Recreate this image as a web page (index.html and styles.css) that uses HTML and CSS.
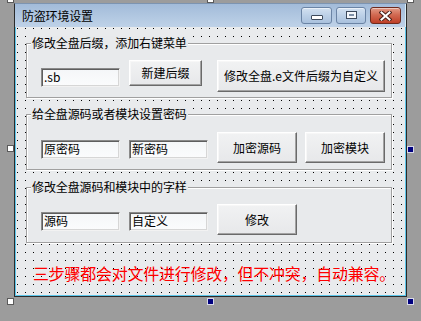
FILE: index.html
```html
<!DOCTYPE html>
<html lang="zh-CN">
<head>
<meta charset="utf-8">
<title>防盗环境设置</title>
<link rel="stylesheet" href="styles.css">
</head>
<body>
<div class="stage">
  <div class="window">
    <div class="titlebar">
      <span class="title">防盗环境设置</span>
      <div class="caption-btns">
        <span class="cbtn min"><i></i></span>
        <span class="cbtn max"><i></i></span>
        <span class="cbtn close">
          <svg width="13" height="10" viewBox="0 0 13 10">
            <path d="M2.5 1.5 L10.5 8.5 M10.5 1.5 L2.5 8.5" stroke="#4a2018" stroke-width="4" stroke-linecap="square" fill="none"/>
            <path d="M2.5 1.5 L10.5 8.5 M10.5 1.5 L2.5 8.5" stroke="#ffffff" stroke-width="2" stroke-linecap="square" fill="none"/>
          </svg>
        </span>
      </div>
    </div>
    <div class="client">
      <fieldset class="frame f1">
        <legend>修改全盘后缀，添加右键菜单</legend>
        <div class="row r1">
          <div class="textbox tb-a">.sb</div>
          <div class="btn b-new">新建后缀</div>
          <div class="btn b-ext">修改全盘.e文件后缀为自定义</div>
        </div>
      </fieldset>
      <fieldset class="frame f2">
        <legend>给全盘源码或者模块设置密码</legend>
        <div class="row r2">
          <div class="textbox tb-a">原密码</div>
          <div class="textbox tb-b">新密码</div>
          <div class="btn b-wide">加密源码</div>
          <div class="btn b-wide2">加密模块</div>
        </div>
      </fieldset>
      <fieldset class="frame f3">
        <legend>修改全盘源码和模块中的字样</legend>
        <div class="row r3">
          <div class="textbox tb-a">源码</div>
          <div class="textbox tb-b">自定义</div>
          <div class="btn b-wide">修改</div>
        </div>
      </fieldset>
      <p class="note">三步骤都会对文件进行修改，但不冲突，自动兼容。</p>
    </div>
  </div>
  <span class="handle hollow h-tl"></span>
  <span class="handle hollow h-tm"></span>
  <span class="handle hollow h-tr"></span>
  <span class="handle hollow h-ml"></span>
  <span class="handle solid h-mr"></span>
  <span class="handle hollow h-bl"></span>
  <span class="handle solid h-bm"></span>
  <span class="handle solid h-br"></span>
</div>
</body>
</html>
```
FILE: styles.css
```css
* { box-sizing: border-box; }

html, body {
  margin: 0;
  padding: 0;
}

body {
  width: 421px;
  height: 321px;
  overflow: hidden;
  background: #9c9c9c;
  font-family: "Noto Sans CJK SC", "DejaVu Sans", sans-serif;
  font-size: 12px;
  color: #000;
}

.stage {
  position: relative;
  width: 421px;
  height: 321px;
  padding-top: 3px;
  padding-left: 14px;
}

.window {
  width: 393px;
  height: 294px;
  border: 1px solid #2a2a2a;
  border-top-color: #7d94b0;
  display: flex;
  flex-direction: column;
}

.titlebar {
  height: 23px;
  flex: none;
  display: flex;
  align-items: center;
  justify-content: space-between;
  padding: 0 4px 0 7px;
  background: linear-gradient(#a2bbd9, #b3c9e2 60%, #bfd2e8);
  border-right: 1px solid #d8ecf6;
}

.title {
  font-size: 12px;
  line-height: 14px;
  color: #000;
  letter-spacing: -0.2px;
}

.caption-btns {
  display: flex;
  gap: 4px;
}

.cbtn {
  height: 17px;
  width: 31px;
  border-radius: 3px;
  display: flex;
  justify-content: center;
}

.cbtn.min, .cbtn.max {
  border: 1px solid #6b84a5;
  background: linear-gradient(#d3e1f1, #bcd0e7 50%, #a9c1dd);
  box-shadow: inset 0 1px 0 rgba(255,255,255,0.55);
}

.cbtn.max { width: 30px; }

.cbtn.min i {
  display: block;
  width: 12px;
  height: 5px;
  margin-top: 7px;
  background: #fff;
  border: 1px solid #3d4a5c;
  border-radius: 1px;
}

.cbtn.max i {
  display: block;
  width: 11px;
  height: 8px;
  margin-top: 3px;
  border: 1px solid #3d4a5c;
  background: #7f91a8;
  box-shadow: inset 0 0 0 2px #f4f7fb;
}

.cbtn.close {
  border: 1px solid #6e2a1d;
  background: linear-gradient(#e29a86, #d26a52 45%, #bf3f27);
  box-shadow: inset 0 1px 0 rgba(255,255,255,0.45);
  align-items: center;
}

.client {
  flex: 1;
  border: 1px solid #5cc6ea;
  border-top: none;
  background-color: #e9ebed;
  background-image: conic-gradient(at 1px 1px, transparent 75%, #000 0);
  background-size: 8px 8px;
  background-position: 1px 1px;
  padding: 9px 0 0 10px;
}

.frame {
  width: 366px;
  margin: 0;
  padding: 0;
  border: 1px solid #a0a0a0;
  background: #e8eaec;
  box-shadow: inset 1px 1px 0 #fff, 1px 1px 0 #fff;
  min-inline-size: 0;
}

.f2 { margin-top: 9px; }
.f3 { margin-top: 10px; }

.frame legend {
  margin-left: 4px;
  padding: 0 1px;
  font-size: 12px;
  line-height: 14px;
  background: #e8eaec;
  letter-spacing: -0.1px;
}

.row {
  display: flex;
  align-items: flex-start;
}

.r1 { height: 47px; }
.r2 { height: 48px; }
.r3 { height: 48px; }

.textbox {
  width: 79px;
  height: 19px;
  border: 1px solid;
  border-color: #8a8a8a #f2f2f2 #f2f2f2 #8a8a8a;
  box-shadow: inset 1px 1px 0 #5e5e5e, inset -1px -1px 0 #d6d6d6;
  background: linear-gradient(#f4f6f8, #fbfcfd);
  padding-left: 2px;
  font-size: 12px;
  line-height: 16px;
  white-space: nowrap;
  overflow: hidden;
}

.r1 .textbox { margin-top: 18px; }
.r2 .textbox { margin-top: 19px; }
.r3 .textbox { margin-top: 18px; }

.tb-a { margin-left: 14px; }
.tb-b { margin-left: 9px; }

.btn {
  display: flex;
  align-items: center;
  justify-content: center;
  border: 1px solid;
  border-color: #ffffff #6a6a6a #6a6a6a #ffffff;
  box-shadow: inset -1px -1px 0 #a3a3a3, inset 1px 1px 0 #f7f7f7;
  background: linear-gradient(#f1f2f3, #e7e8ea);
  font-size: 12px;
  line-height: 14px;
  white-space: nowrap;
}

.b-new {
  width: 73px;
  height: 26px;
  margin-left: 9px;
  margin-top: 10px;
}

.b-ext {
  width: 168px;
  height: 32px;
  margin-left: 15px;
  margin-top: 10px;
}

.b-wide, .b-wide2 {
  width: 80px;
  height: 31px;
}

.r2 .b-wide, .r2 .b-wide2 { margin-top: 11px; }
.r3 .b-wide { margin-top: 10px; }

.b-wide { margin-left: 9px; }
.b-wide2 { margin-left: 8px; }

.note {
  margin: 22px 0 0 7px;
  font-size: 16px;
  line-height: 16px;
  letter-spacing: -0.26px;
  color: #ff0000;
  white-space: nowrap;
}

.handle {
  position: absolute;
  width: 7px;
  height: 7px;
}

.handle.hollow {
  background: #ffffff;
  border: 1px solid #5a5a5a;
}

.handle.solid {
  background: #00007f;
  border: 1px solid #d8d8e8;
}

.h-tl { left: 7px; top: -4px; }
.h-tm { left: 207px; top: -4px; }
.h-tr { left: 407px; top: -4px; }
.h-ml { left: 7px; top: 145px; }
.h-mr { left: 407px; top: 146px; }
.h-bl { left: 7px; top: 298px; }
.h-bm { left: 207px; top: 298px; }
.h-br { left: 407px; top: 298px; }
```
